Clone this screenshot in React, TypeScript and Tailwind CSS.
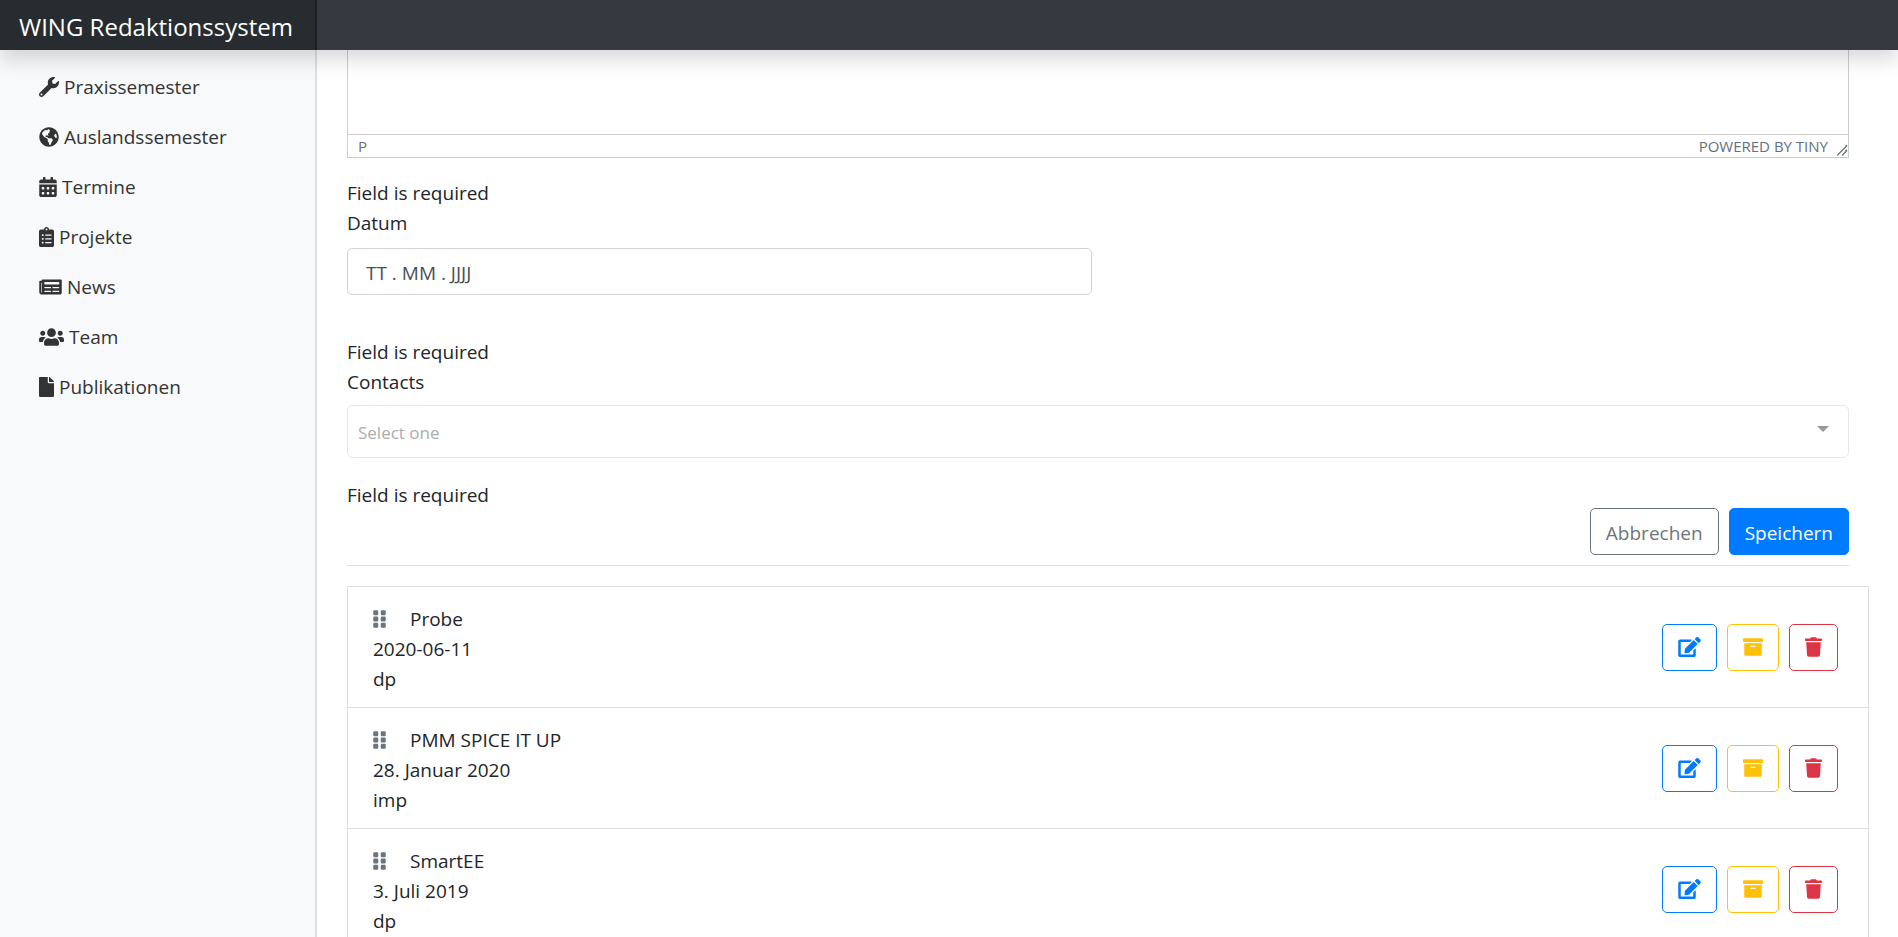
import React from 'react';
import {
  FaArchive,
  FaCalendarAlt,
  FaClipboardList,
  FaEdit,
  FaFile,
  FaGlobeAmericas,
  FaGripVertical,
  FaNewspaper,
  FaTrash,
  FaUsers,
  FaWrench,
} from 'react-icons/fa';
import type { IconType } from 'react-icons';

interface NavItem {
  label: string;
  icon: IconType;
  iconClass: string;
}

interface Project {
  title: string;
  date: string;
  type: string;
}

const navItems: NavItem[] = [
  { label: 'Praxissemester', icon: FaWrench, iconClass: 'h-5 w-5' },
  { label: 'Auslandssemester', icon: FaGlobeAmericas, iconClass: 'h-5 w-5' },
  { label: 'Termine', icon: FaCalendarAlt, iconClass: 'h-5 w-[18px]' },
  { label: 'Projekte', icon: FaClipboardList, iconClass: 'h-5 w-[15px]' },
  { label: 'News', icon: FaNewspaper, iconClass: 'h-5 w-[23px]' },
  { label: 'Team', icon: FaUsers, iconClass: 'h-5 w-[25px]' },
  { label: 'Publikationen', icon: FaFile, iconClass: 'h-5 w-[15px]' },
];

const projects: Project[] = [
  { title: 'Probe', date: '2020-06-11', type: 'dp' },
  { title: 'PMM SPICE IT UP', date: '28. Januar 2020', type: 'imp' },
  { title: 'SmartEE', date: '3. Juli 2019', type: 'dp' },
];

const Header: React.FC = () => (
  <header className="relative z-10 flex h-[50px] shrink-0 bg-[#343a40] shadow-[0_10px_20px_rgba(0,0,0,0.15)]">
    <a
      href="#"
      className="flex w-[317px] items-center border-r-2 border-[#1d2023] bg-[#272c30] pt-1 pl-[19px] text-2xl whitespace-nowrap text-white"
    >
      WING Redaktionssystem
    </a>
  </header>
);

const Sidebar: React.FC = () => (
  <nav className="w-[317px] shrink-0 border-r-2 border-[#dfe0e1] bg-[#f8f9fa] pt-3">
    <ul>
      {navItems.map(({ label, icon: Icon, iconClass }) => (
        <li key={label}>
          <a href="#" className="flex h-[50px] items-center gap-[5px] pl-[39px] text-[#333]">
            <Icon className={iconClass} />
            {label}
          </a>
        </li>
      ))}
    </ul>
  </nav>
);

const Editor: React.FC = () => (
  <div className="border-x border-b border-[#ccc]">
    <textarea aria-label="Beschreibung" className="block h-[84px] w-full resize-none outline-none" />
    <div className="flex h-[23px] items-center border-t border-[#ccc] pl-[10px] text-[15px] text-[#64707d]">
      <span className="flex-1">P</span>
      <a href="#">POWERED BY TINY</a>
      <svg
        className="mb-px ml-2 h-3 w-3 self-end"
        viewBox="0 0 10 10"
        fill="#59636e"
        stroke="#59636e"
        strokeWidth="0.4"
      >
        <path d="M8.1 1.1A.5.5 0 1 1 9 2l-7 7A.5.5 0 1 1 1 9l7-7zM8.1 5.1A.5.5 0 1 1 9 6l-3 3A.5.5 0 1 1 5 9l3-3z" />
      </svg>
    </div>
  </div>
);

const ProjectRow: React.FC<{ project: Project }> = ({ project }) => (
  <li className="flex items-center justify-between border border-b-0 border-[#dfdfdf] py-[13px] pr-[30px] pl-[25px]">
    <div className="pt-1">
      <div className="flex items-center gap-6">
        <FaGripVertical className="h-5 w-[13px] text-[#6c757d]" />
        <span>{project.title}</span>
      </div>
      <div>{project.date}</div>
      <div>{project.type}</div>
    </div>
    <div className="flex gap-[10px]">
      <button
        type="button"
        aria-label="Bearbeiten"
        className="flex h-[47px] items-center rounded-[5px] border border-[#007bff] px-[15px] text-[#007bff]"
      >
        <FaEdit className="h-5 w-[23px]" />
      </button>
      <button
        type="button"
        aria-label="Archivieren"
        className="flex h-[47px] items-center rounded-[5px] border border-[#ffc107] px-[15px] text-[#ffc107]"
      >
        <FaArchive className="h-5 w-5" />
      </button>
      <button
        type="button"
        aria-label="Löschen"
        className="flex h-[47px] items-center rounded-[5px] border border-[#dc3545] px-[15px] text-[#dc3545]"
      >
        <FaTrash className="h-5 w-[17px]" />
      </button>
    </div>
  </li>
);

const App: React.FC = () => {
  return (
    <div className="flex h-screen flex-col overflow-hidden bg-white font-['Open_Sans','Noto_Sans',sans-serif] text-[19px] leading-[30px] text-[#212529]">
      <Header />
      <div className="flex min-h-0 flex-1">
        <Sidebar />
        <main className="min-w-0 flex-1 overflow-hidden pr-[29px] pl-[30px]">
          <form className="mr-5">
            <Editor />
            <p className="mt-5">Field is required</p>

            {/* Datum */}
            <label htmlFor="datum" className="block">Datum</label>
            <div className="mt-[10px] grid grid-cols-2 gap-3">
              <input
                id="datum"
                type="text"
                placeholder="TT . MM . JJJJ"
                className="h-[47px] rounded-[5px] border border-[#ced4da] px-[18px] pt-[2px] outline-none placeholder:text-[#495057]"
              />
            </div>
            <p className="mt-[42px]">Field is required</p>

            {/* Contacts */}
            <label htmlFor="contacts" className="block">Contacts</label>
            <div className="relative mt-2">
              <select
                id="contacts"
                defaultValue=""
                className="block h-[53px] w-full appearance-none rounded-md border border-[#e8e8e8] bg-white px-[10px] pt-[2px] text-[17px] text-[#adadad] outline-none"
              >
                <option value="">Select one</option>
              </select>
              <svg className="pointer-events-none absolute top-[21px] right-5 h-[6px] w-3" viewBox="0 0 12 6" fill="#999">
                <path d="M0 0h12L6 6z" />
              </svg>
            </div>
            <p className="mt-[22px]">Field is required</p>

            <div className="-mt-[2px] flex justify-end gap-[10px]">
              <button
                type="button"
                className="h-[47px] rounded-[5px] border border-[#6c757d] px-[15px] pt-[2px] text-[#6c757d]"
              >
                Abbrechen
              </button>
              <button
                type="submit"
                className="h-[47px] rounded-[5px] border border-[#007bff] bg-[#007bff] px-[15px] pt-[2px] text-white"
              >
                Speichern
              </button>
            </div>
            <hr className="mt-[10px] mb-5 border-[#dfdfdf]" />
          </form>

          <ul>
            {projects.map((project) => (
              <ProjectRow key={project.title} project={project} />
            ))}
          </ul>
        </main>
      </div>
    </div>
  );
};

export default App;
